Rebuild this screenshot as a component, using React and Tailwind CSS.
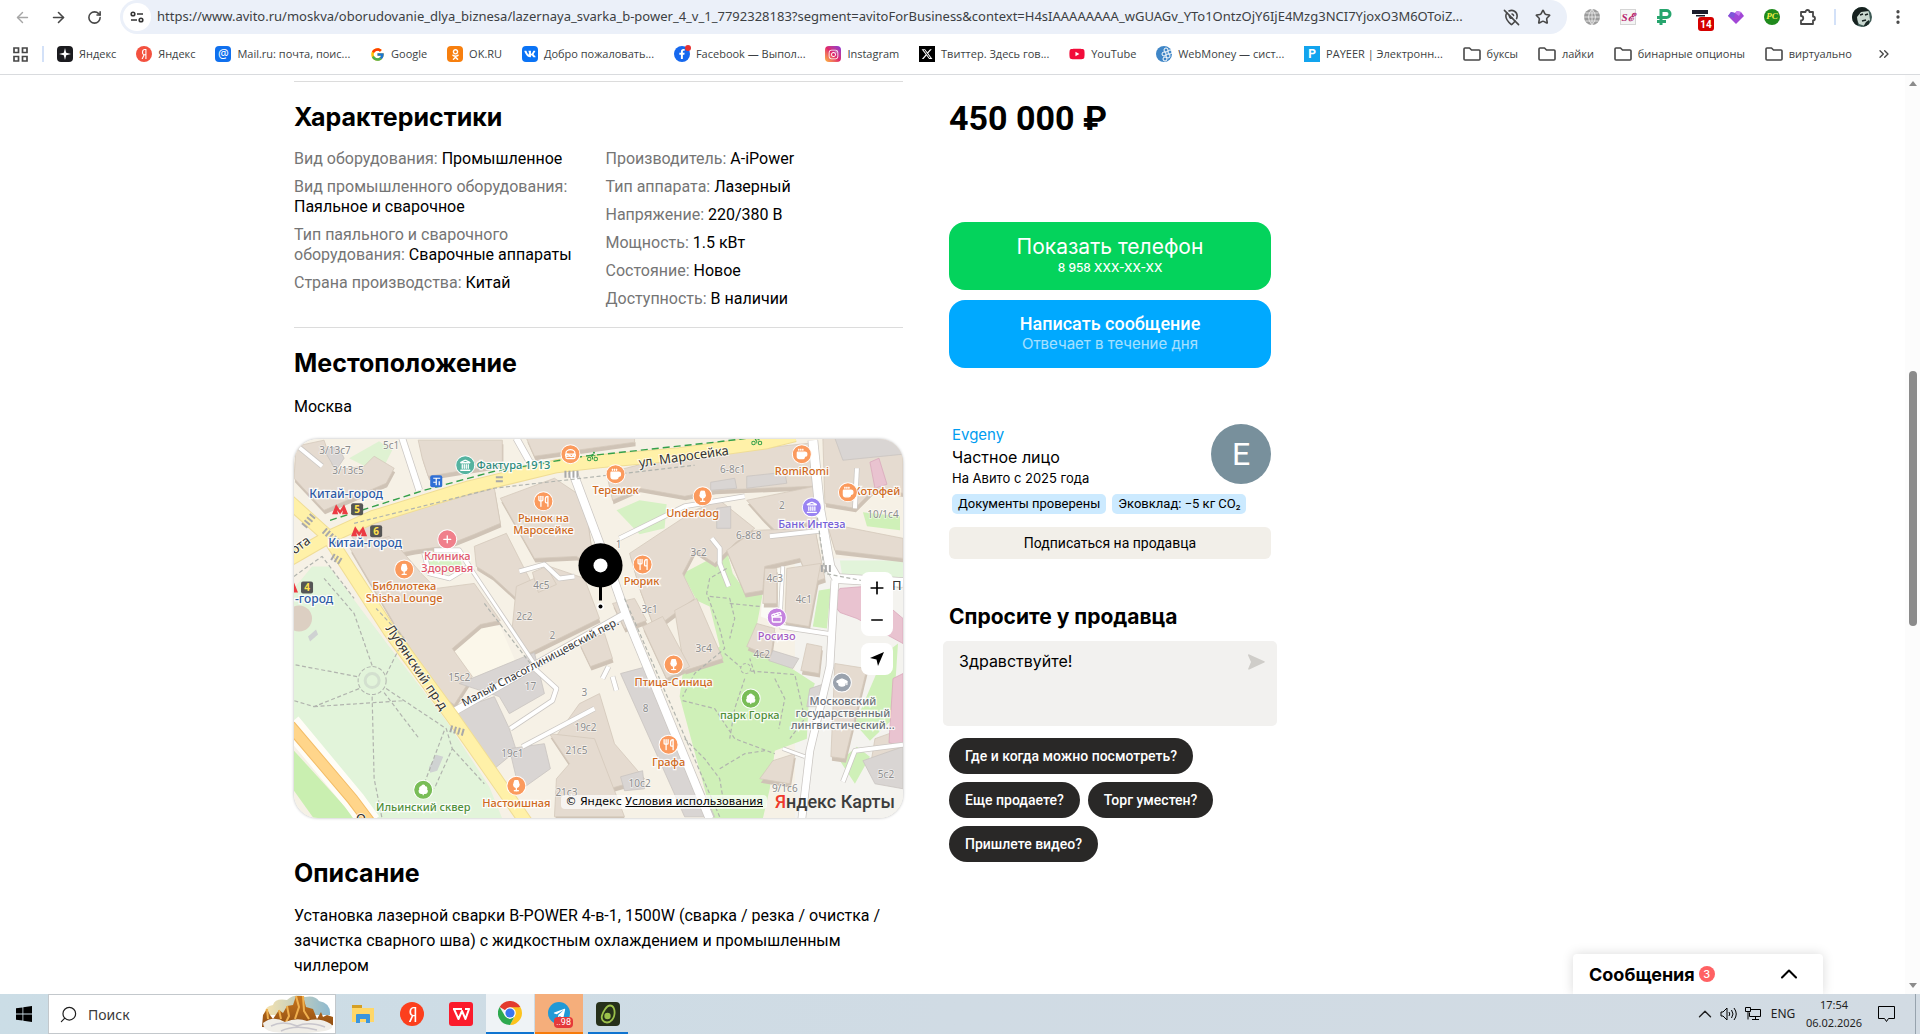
import React from 'react';
import {
  ArrowLeft, ArrowRight, RotateCw, Star, MapPinOff, EllipsisVertical, ChevronsRight,
  ChevronUp, Coffee, Wine, Utensils, Landmark, TreeDeciduous, GraduationCap, Plus, Minus, Hamburger,
  Clapperboard, Search, Bike,
} from 'lucide-react';
import { FaYandex, FaOdnoklassniki, FaVk, FaFacebookF, FaInstagram, FaYoutube, FaTelegramPlane } from 'react-icons/fa';
import { FaXTwitter } from 'react-icons/fa6';
import { FcGoogle } from 'react-icons/fc';

const URL_TEXT =
  'https://www.avito.ru/moskva/oborudovanie_dlya_biznesa/lazernaya_svarka_b-power_4_v_1_7792328183?segment=avitoForBusiness&context=H4sIAAAAAAAA_wGUAGv_YTo1OntzOjY6IjE4Mzg3NCI7YjoxO3M6OToiZ...';

/* ---------- browser chrome ---------- */

function IconButton({ label, children, className = 'w-9' }) {
  return (
    <button type="button" aria-label={label} className={`flex h-[34px] shrink-0 items-center justify-center text-[#474747] ${className}`}>
      {children}
    </button>
  );
}

function Avatar() {
  return (
    <svg viewBox="0 0 20 20" className="size-5">
      <defs><clipPath id="avatar"><circle cx="10" cy="10" r="10" /></clipPath></defs>
      <g clipPath="url(#avatar)">
        <rect width="20" height="20" fill="#3d5a55" />
        <path d="M5 2c5-3 11-1 12 4l1 7-5 6-6-2-3-6z" fill="#c9d8d0" />
        <path d="M0 0h13l4 4-8 1-4 5 1 8-6 2z" fill="#16211f" />
        <path d="M8 8l3-1M13 8l3-1M10 14l4-1" stroke="#16211f" strokeWidth="1.5" />
        <path d="M14 15l3-2v7h-6z" fill="#1c2b28" />
      </g>
    </svg>
  );
}

function Toolbar() {
  return (
    <div className="flex h-[34px] items-center pl-1 pr-1">
      <IconButton label="Назад"><ArrowLeft size={17} className="text-[#a6a6a6]" /></IconButton>
      <IconButton label="Вперёд"><ArrowRight size={17} strokeWidth={2.3} /></IconButton>
      <IconButton label="Обновить"><RotateCw size={15} strokeWidth={2.5} /></IconButton>
      <div className="ml-2 flex h-[34px] min-w-0 flex-1 items-center rounded-full bg-[#ebf0f9] pl-[3px] pr-2">
        <button type="button" aria-label="Сведения о сайте" className="mr-1.5 flex size-7 shrink-0 items-center justify-center rounded-full bg-white">
          <svg viewBox="0 0 14 12" className="h-3 w-3.5" fill="none" stroke="#333" strokeWidth="1.6">
            <circle cx="3" cy="3" r="1.8" /><path d="M7 3h6M1 9h6" /><circle cx="11" cy="9" r="1.8" />
          </svg>
        </button>
        <input aria-label="Адресная строка" readOnly value={URL_TEXT} className="min-w-0 flex-1 bg-transparent font-['Noto_Sans',sans-serif] text-[13px] text-[#3c3f43] outline-none" />
        <IconButton label="Местоположение" className="w-8"><MapPinOff size={17} strokeWidth={2.2} /></IconButton>
        <IconButton label="Добавить в закладки" className="w-8"><Star size={16} strokeWidth={2.4} /></IconButton>
      </div>
      <div className="ml-[7px] flex">
        <IconButton label="VPN">
          <svg viewBox="0 0 16 16" className="size-4"><circle cx="8" cy="8" r="8" fill="#9b9b9b" /><path d="M0 8h16M1.500 4h13M1.500 12h13M8 0v16M8 0Q1 8 8 16M8 0Q15 8 8 16" fill="none" stroke="#e9e9e9" strokeWidth="0.9" /></svg>
        </IconButton>
        <IconButton label="SE">
          <span className="flex size-4 items-center justify-center border border-[#d5d5d5] bg-[#f4f4f4] font-['Liberation_Serif',serif] text-[11px] font-bold italic text-[#b81f6e]">Sℰ</span>
        </IconButton>
        <IconButton label="Рубль">
          <svg viewBox="0 0 16 16" className="size-4" fill="none" stroke="#27a56e" strokeWidth="3"><path d="M5 16V1.500h5.500a3.200 3.200 0 010 7H1M1 12.500h9" /></svg>
        </IconButton>
        <IconButton label="Шляпа" className="relative w-9">
          <svg viewBox="0 0 16 16" className="size-4"><path d="M0 1h16v4H0zM4 6h9v1.500H4z" fill="#1c1c2b" /></svg>
          <span className="absolute left-4 top-[17px] flex h-3.5 w-4 items-center justify-center rounded-[3px] bg-[#d50000] font-[Roboto,sans-serif] text-[10px] font-bold text-white">14</span>
        </IconButton>
        <IconButton label="Кристалл">
          <svg viewBox="0 0 16 16" className="size-4"><path d="M8 15L0 7l3-4 4 1 2-2 4 1 3 4z" fill="#a146d6" /><path d="M7 4l2-2 4 1-2 4z" fill="#c77bf0" /><path d="M0 7l3-4 4 1-1 5z" fill="#7e57d8" /></svg>
        </IconButton>
        <IconButton label="PC">
          <span className="flex size-4 items-center justify-center rounded-full bg-[#1f8a1c] font-['Liberation_Serif',serif] text-[9px] font-bold italic text-[#f3ee4a]">PC</span>
        </IconButton>
        <IconButton label="Расширения">
          <svg viewBox="0 0 18 18" className="size-[18px]" fill="none" stroke="currentColor" strokeWidth="1.8" strokeLinejoin="round">
            <path d="M2 4h4.500a2 2 0 014 0H14v4.500a2 2 0 010 4V16H2v-3.500a2.200 2.200 0 000-4.500z" />
          </svg>
        </IconButton>
      </div>
      <span className="mx-2 h-4 w-0.5 bg-[#d3e1f8]" />
      <IconButton label="Профиль"><Avatar /></IconButton>
      <IconButton label="Меню"><EllipsisVertical size={18} strokeWidth={2.4} /></IconButton>
    </div>
  );
}

const tile = 'flex size-4 shrink-0 items-center justify-center';

function FolderIcon() {
  return (
    <svg viewBox="0 0 18 14" className="h-3.5 w-[18px] shrink-0" fill="none" stroke="#474747" strokeWidth="1.600" strokeLinejoin="round">
      <path d="M1 2q0-1 1-1h4.500L8.500 3H16q1 0 1 1v8q0 1-1 1H2q-1 0-1-1z" />
    </svg>
  );
}

const BOOKMARKS = [
  { t: 'Яндекс', i: <span className={`${tile} rounded bg-[#1b1b1f]`}><svg viewBox="0 0 12 12" className="size-3"><path d="M6 0L7.200 4.800 12 6 7.200 7.200 6 12 4.800 7.200 0 6 4.800 4.800z" fill="#fff" /></svg></span> },
  { t: 'Яндекс', i: <span className={`${tile} rounded-full bg-[#f3513f] text-white`}><FaYandex size={10} /></span> },
  { t: 'Mail.ru: почта, поис...', i: <span className={`${tile} rounded bg-[#1070ee] font-['Noto_Sans',sans-serif] text-[12px] leading-none text-white`}>@</span> },
  { t: 'Google', i: <FcGoogle size={15} /> },
  { t: 'OK.RU', i: <span className={`${tile} rounded bg-[#f77f0e] text-white`}><FaOdnoklassniki size={11} /></span> },
  { t: 'Добро пожаловать...', i: <span className={`${tile} rounded bg-[#0a73f5] text-white`}><FaVk size={12} /></span> },
  { t: 'Facebook — Выпол...', i: <span className={`${tile} relative rounded-full bg-[#1668ee] text-white`}><FaFacebookF size={10} /><span className="absolute -right-px -top-px size-1.5 rounded-full bg-[#e63232]" /></span> },
  { t: 'Instagram', i: <span className={`${tile} rounded bg-gradient-to-tr from-[#fdb52c] via-[#e0246b] to-[#8a2bd8] text-white`}><FaInstagram size={11} /></span> },
  { t: 'Твиттер. Здесь гов...', i: <span className={`${tile} bg-black text-white`}><FaXTwitter size={12} /></span> },
  { t: 'YouTube', i: <FaYoutube size={16} className="text-[#f20c3a]" /> },
  { t: 'WebMoney — сист...', i: <svg viewBox="0 0 16 16" className="size-4 shrink-0"><circle cx="8" cy="8" r="8" fill="#3f86c7" /><g fill="none" stroke="#fff"><circle cx="10" cy="4" r="2" /><circle cx="14" cy="6" r="2" /><circle cx="8" cy="8" r="2" /><circle cx="12" cy="10" r="2" /><circle cx="9" cy="13" r="2" /></g></svg> },
  { t: 'PAYEER | Электронн...', i: <span className={`${tile} bg-[#12a4ee] font-[Roboto,sans-serif] text-[12px] font-bold leading-none text-white`}>P</span> },
  ...['буксы', 'лайки', 'бинарные опционы', 'виртуально'].map((t) => ({ t, i: <FolderIcon /> })),
];

function BookmarksBar() {
  return (
    <nav aria-label="Закладки" className="flex h-[41px] items-center border-b border-[#d9dbde] pl-3 pr-7 font-['Open_Sans',sans-serif] text-[11px] text-[#3c3f43]">
      <button type="button" aria-label="Приложения" className="px-px">
        <svg viewBox="0 0 15 15" className="size-[15px]" fill="none" stroke="#474747" strokeWidth="1.700"><path d="M1 1h4.500v4.500H1zM9.500 1H14v4.500H9.500zM1 9.500h4.500V14H1zM9.500 9.500H14V14H9.500z" /></svg>
      </button>
      <span className="mx-[13px] h-4 w-0.5 shrink-0 bg-[#d3e1f8]" />
      <ul className="flex min-w-0 flex-1 items-center justify-between">
        {BOOKMARKS.map((b, k) => (
          <li key={k}>
            <a href="#bookmark" className="flex items-center gap-1.5 whitespace-nowrap">{b.i}{b.t}</a>
          </li>
        ))}
      </ul>
      <button type="button" aria-label="Другие закладки" className="ml-6 text-[#474747]"><ChevronsRight size={16} /></button>
    </nav>
  );
}

/* ---------- map ---------- */

const DASHED = [
  'M78 227L60 175 30 140M92 236L110 200 82 170M63 238L0 226M65 250L20 268 0 262M78 258L80 340 88 380M92 250L152 290 158 310 140 350M90 254L125 300M20 268L110 262M158 310L190 345M150 292L130 345',
  'M432 130L415 140 412 155 425 190 430 210 400 235 388 258M415 158L435 160 440 180 435 200M435 165L465 168M430 215L450 232 500 236 510 280 495 300M388 262L420 270 440 300 480 315M460 235L455 220M450 240L440 270 435 300M390 300L410 320 425 340 430 370M480 240L490 260 484 290M425 330L450 315 470 312',
  'M0 138L28 118 60 160M60 85L200 50 400 27M190 165L236 225M330 160L425 378M520 60L530 135 608 150',
];

const BUILDINGS = [
  'M2 8L30 2 40 32 70 28 80 18 100 30 92 45 30 72 0 40z',
  'M124 2H208V26L134 38 128 20z',
  'M232 0H340V4L240 18z',
  'M58 98L80 82 200 50 206 85 180 96 150 108 120 112 70 122z',
  'M56 110L95 98 128 136 142 150 180 145 206 182 186 186 158 210 178 238 160 266 148 258 100 185z',
  'M180 108L212 95 240 150 222 160 198 138 182 128z',
  'M222 148L240 140 255 128 290 140 305 180 234 215 218 188z',
  'M206 60L260 40 290 60 300 130 282 118 240 120z',
  'M238 134L252 128 262 146 244 154z',
  'M312 35L370 20 515 5 518 48 420 52 390 58 345 50 318 62z',
  'M452 62L520 48 524 82 480 92 468 80z',
  'M335 115L400 72 425 62 460 90 440 105 420 125 400 112 388 135 400 160 360 190 345 150z',
  'M432 112L460 92 520 90 530 140 515 145 505 120 470 128 468 152 450 155z',
  'M380 172L402 160 428 220 390 232z',
  'M318 165L340 160 352 182 330 190z',
  'M348 188L368 178 395 228 372 240z',
  'M470 130L482 130 482 165 468 165z',
  'M492 130L526 125 514 188 490 184z',
  'M462 185L480 190 476 218 452 208z',
  'M512 205L527 208 524 235 506 232z',
  'M528 0H608V55L580 50 560 70 530 65z',
  'M532 85L608 100V120L540 112z',
  'M540 225L572 230 550 320 536 318z',
  'M580 300L608 290V340L575 330z',
  'M478 322L500 315 495 345 465 340z',
  'M285 265L305 255 320 305 350 340 315 350 300 310 260 300z',
  'M255 295L300 300 330 378 260 378 262 340 275 325z',
  'M285 205L310 195 318 220 296 228z',
];

const GREY_BUILDINGS = [
  'M165 245L240 214 250 255 215 275 205 258z',
  'M160 272L200 258 215 290 222 312 200 330 178 300z',
  'M215 310L250 305 256 330 225 352z',
  'M416 44L440 40 442 50 416 52z',
  'M452 38L490 34 492 45 452 50z',
  'M422 70L436 68 436 90 422 90z',
  'M326 235L352 228 420 378 390 378z',
  'M478 212L504 220 498 230 474 222z',
  'M515 250L530 245 526 268 512 268z',
  'M30 12L44 8 50 20 42 32z',
  'M540 0H608V16L548 22z',
  'M326 338L348 332 350 350 330 352z',
  'M568 322L608 308V350L580 345z',
];

const WHITE_ROADS = [
  ['M108 0L125 52', 6], ['M222 0L236 25 262 28', 6], ['M278 33L305 105 318 138 332 178 365 258 415 380', 8],
  ['M158 274L242 226 330 176', 7], ['M518 2L525 72 535 128 542 140 608 144', 9], ['M540 142L535 228 515 312 507 380', 7],
  ['M0 5L28 28', 4], ['M325 100L390 68 450 58', 4], ['M417 100L425 110 425 125 434 148', 4], ['M475 98L530 92', 4],
  ['M485 188L538 196', 4], ['M488 128L485 188', 3], ['M225 133L250 126 265 140 280 138', 4], ['M240 230L262 250 258 262 216 290', 4],
  ['M228 308L300 270', 4], ['M130 115L135 135 155 140 175 128 165 112 140 112', 4], ['M175 128L240 225', 3], ['M548 343L560 312 608 306', 4], ['M562 30L560 70', 4],
  ['M488 310L510 318', 3], ['M308 240L314 228M322 252L318 238', 4],
];

const HOUSE_NUMBERS = [
  ['3/13с7', 41, 16], ['5с1', 97, 11], ['3/13с5', 54, 36], ['4с5', 247, 151], ['2с2', 230, 182], ['2', 258, 200], ['15с2', 165, 242],
  ['17', 236, 251], ['3', 290, 257], ['19с2', 291, 292], ['21с5', 282, 315], ['19с1', 218, 318], ['21с3', 272, 357],
  ['6-8с1', 438, 35], ['2', 487, 71], ['6-8с8', 454, 101], ['3с2', 404, 118], ['1', 324, 110], ['4с3', 480, 144], ['4с1', 509, 165],
  ['3с1', 355, 175], ['3с4', 409, 213], ['4с2', 467, 219], ['8', 351, 273], ['10с2', 345, 348], ['9/1с6', 490, 353], ['5с2', 591, 339], ['10/1с4', 588, 80],
];

const ORANGE = '#fb9a5d';
const POIS = [
  [Landmark, 171, 27, '#55b3a0'], [Hamburger, 276, 16, ORANGE], [Utensils, 249, 63, ORANGE], [Plus, 153, 101, '#f07f8b'],
  [Wine, 110, 131, ORANGE, 1], [TreeDeciduous, 129, 351, '#79bd57', 1], [Wine, 222, 347, ORANGE, 1], [Coffee, 321, 36, ORANGE, 1],
  [Wine, 408, 58, ORANGE, 1], [Coffee, 507, 16, ORANGE, 1], [Coffee, 553, 54, ORANGE, 1], [Landmark, 517, 69, '#9a84f2'],
  [Utensils, 348, 126, ORANGE], [Clapperboard, 482, 179, '#c583df'], [Wine, 379, 226, ORANGE, 1], [TreeDeciduous, 456, 260, '#79bd57', 1],
  [Utensils, 374, 306, ORANGE], [GraduationCap, 547, 244, '#9aa2ad', 1],
];

const FOOD = '#cf6a22';
const LABELS = [
  ['Фактура 1913', 219, 31, '#2e8b7c'], ['Рынок на', 249, 84, FOOD], ['Маросейке', 249, 96, FOOD], ['Клиника', 153, 122, '#e0566c'],
  ['Здоровья', 153, 134, '#e0566c'], ['Библиотека', 110, 152, FOOD], ['Shisha Lounge', 110, 164, FOOD], ['Ильинский сквер', 129, 372, '#4f8f3a'],
  ['Настоишная', 222, 368, FOOD], ['Теремок', 321, 56, FOOD], ['Underdog', 398, 79, FOOD], ['RomiRomi', 507, 37, FOOD], ['Котофей', 582, 57, FOOD],
  ['Банк Интеза', 517, 90, '#7560d8'], ['Рюрик', 347, 147, FOOD], ['Росизо', 482, 201, '#a45cc4'], ['Птица-Синица', 379, 247, FOOD],
  ['парк Горка', 455, 280, '#4f8f3a'], ['Графа', 374, 327, FOOD], ['Московский', 548, 266, '#6b7078'], ['государственный', 548, 278, '#6b7078'],
  ['лингвистический...', 548, 290, '#6b7078'],
];

function Metro({ x, y, line, box }) {
  return (
    <g>
      <path d={`M${x - 8} ${y + 5}L${x - 4} ${y - 5} ${x} ${y + 1} ${x + 4} ${y - 5} ${x + 8} ${y + 5}H${x + 2}L${x + 3} ${y + 1} ${x} ${y + 5} ${x - 3} ${y + 1} ${x - 2} ${y + 5}z`} fill="#ec3b42" />
      <rect x={box - 6} y={y - 6} width="12" height="12" rx="2" fill="#555" />
      <text x={box} y={y + 4} textAnchor="middle" fontSize="10" fontWeight="700" fill="#ffe14d">{line}</text>
    </g>
  );
}

function MapDrawing() {
  return (
    <svg viewBox="0 0 608 380" preserveAspectRatio="xMidYMid slice" className="block h-full w-full font-['Noto_Sans',sans-serif]" role="img" aria-label="Карта">
      <rect width="608" height="380" fill="#f6f1e6" />
      <path d="M500 120H608V380H500z" fill="#f4f3ef" />
      {/* parks */}
      <path d="M18 128L35 128 95 208 152 282 195 348 208 380H82L0 282V150z" fill="#e2f4da" />
      <path d="M0 312L62 380H20L0 352z" fill="#c9efb0" />
      <path d="M55 20L85 3 98 12 90 28 75 30z" fill="#dff2d2" />
      <path d="M432 112L388 135 402 162 415 168 425 208 388 235 385 258 418 380H468L475 350 480 312 512 300 514 262 520 245 500 232 458 208 468 155 450 152 438 135z" fill="#cff0b8" />
      <path d="M322 72L345 62 372 66 370 90 345 96z" fill="#d6f1c4" />
      <path d="M524 152L536 150 532 190 518 188zM560 285L590 215 603 205 598 280 575 302zM545 322L562 308 575 318 560 345zM568 74L605 78V92L572 88z" fill="#cff0b8" />
      <path d="M132 118L150 112 165 116 168 128 155 135 138 132z" fill="#d6f1c4" />
      <path d="M545 122H608V142H548z" fill="#e2f4da" />
      {/* courtyards */}
      <path d="M158 210L190 185 206 188 222 225 182 242z" fill="#fbf7ea" />
      <path d="M470 130L490 130 485 185 466 178z" fill="#fbfbf5" />
      {/* buildings */}
      {BUILDINGS.map((d) => <path key={d} d={d} transform="translate(1 4)" fill="#cfc3b6" />)}
      {BUILDINGS.map((d) => <path key={d} d={d} fill="#e5dbd0" stroke="#d5c9bc" strokeWidth="0.8" />)}
      {GREY_BUILDINGS.map((d) => <path key={d} d={d} fill="#d9d5d3" stroke="#c9c4c1" strokeWidth="0.8" />)}
      <g fill="#e9c3d0" stroke="#d9a9bb" strokeWidth="0.8">
        <path d="M575 24L584 20 592 46 580 50zM545 150Q533 162 545 174L562 180 608 205V180L570 148zM598 240L608 235V308L594 304z" />
      </g>
      <circle cx="5" cy="180" r="13" fill="#dccfc2" />
      <path d="M14 198L22 191 24 196 16 203zM135 328L142 316 149 318 143 332 136 334z" fill="#cfd2d2" />
      {/* minor roads */}
      {WHITE_ROADS.map(([d, w]) => <path key={d} d={d} fill="none" stroke="#cbc7c3" strokeWidth={w + 1.5} strokeLinejoin="round" />)}
      {WHITE_ROADS.map(([d, w]) => <path key={d} d={d} fill="none" stroke="#fff" strokeWidth={w} strokeLinejoin="round" />)}
      {/* main roads */}
      <g fill="none" strokeLinejoin="round">
        <path d="M-4 285L60 362 76 384" stroke="#fffdf7" strokeWidth="22" />
        <path d="M-4 287L58 360 76 384" stroke="#f3bd68" strokeWidth="12" />
        <path d="M-4 287L58 360 76 384" stroke="#ffd58a" strokeWidth="10" />
        <path d="M-6 122L32 100 78 79 175 49 262 28 305 23 385 16 472 4 500-3M-6 62L34 98 95 192 158 278 198 335 232 384" stroke="#f0dd96" strokeWidth="14" />
        <path d="M-6 122L32 100 78 79 175 49 262 28 305 23 385 16 472 4 500-3M-6 62L34 98 95 192 158 278 198 335 232 384" stroke="#fff1a8" strokeWidth="12" />
        <path d="M36 82L130 52 200 33 290 18 420 4 470 -2" stroke="#35a04a" strokeWidth="1.4" strokeDasharray="7 4" />
        {DASHED.map((d) => <path key={d} d={d} stroke="#b1b4ae" strokeWidth="1.2" strokeDasharray="4 2.500" />)}
        <path d="M38 118L48 124M10 88L20 76M30 92L44 104M156 290L170 294M205 38V46M270 36H284M526 130H536" stroke="#a9a9a9" strokeWidth="7" strokeDasharray="2 2" />
      </g>
      <circle cx="78" cy="242" r="14" fill="#e2f4da" stroke="#b1b4ae" strokeDasharray="4 2" />
      <circle cx="78" cy="242" r="7" fill="none" stroke="#d3e0cf" strokeWidth="3" />
      <circle cx="451" cy="230" r="5" fill="#cff0b8" stroke="#b1b4ae" strokeDasharray="3 2" />
      {/* captions */}
      <g textAnchor="middle" fontSize="10" fill="#8d8d8d" stroke="#fff" strokeWidth="1.500" strokeOpacity="0.6" paintOrder="stroke">
        {HOUSE_NUMBERS.map(([t, x, y]) => <text key={t + x} x={x} y={y}>{t}</text>)}
      </g>
      <g fontSize="13" fill="#333" stroke="#fff" strokeWidth="2" strokeOpacity="0.7" paintOrder="stroke">
        <text transform="translate(345 29) rotate(-8)">ул. Маросейка</text>
        <text fontSize="13" transform="translate(91 190) rotate(56)">Лубянский пр-д</text>
        <text fontSize="11" transform="translate(170 268) rotate(-28)">Малый Спасоглинищевский пер.</text>
        <text transform="translate(-6 121) rotate(-36)">рота</text>
        <text x="597" y="152">П</text>
        <text x="62" y="384">О</text>
      </g>
      <g textAnchor="middle" fontSize="11" fontWeight="500" stroke="#fff" strokeWidth="2.500" strokeOpacity="0.85" paintOrder="stroke">
        {LABELS.map(([t, x, y, c]) => <text key={t} x={x} y={y} fill={c}>{t}</text>)}
        <g fill="#2d5aa6" fontSize="12">
          <text x="52" y="60">Китай-город</text>
          <text x="71" y="109">Китай-город</text>
          <text x="20" y="165">-город</text>
        </g>
      </g>
      <Metro x={46} y={71} line="5" box={63} />
      <Metro x={65} y={93} line="6" box={82} />
      <Metro x={-4} y={149} line="4" box={13} />
      <rect x="136" y="37" width="12" height="12" rx="2" fill="#2f6fd6" />
      <path d="M139 40h7M142 40v7M145 43v4M139 44h3" stroke="#fff" strokeWidth="1.200" />
      <Bike x={291} y={12} width={14} height={12} stroke="#35a04a" />
      <Bike x={455} y={-4} width={14} height={12} stroke="#35a04a" />
      {POIS.map(([Icon, x, y, c, solid]) => (
        <g key={`${x}-${y}`}>
          <circle cx={x} cy={y} r="9.500" fill={c} stroke="#fff" />
          <Icon x={x - 6} y={y - 6} width={12} height={12} stroke="#fff" fill={solid ? '#fff' : 'none'} strokeWidth={2.6} />
        </g>
      ))}
      {/* pin */}
      <circle cx="306" cy="168" r="3.500" fill="#fff" />
      <circle cx="306" cy="168" r="2" fill="#000" />
      <path d="M304.500 146h3v16h-3z" fill="#000" />
      <circle cx="306" cy="127" r="22" fill="#000" />
      <circle cx="306" cy="127" r="7" fill="#fff" />
    </svg>
  );
}

function LocationMap() {
  return (
    <div className="relative mt-[22px] aspect-[609/379] overflow-hidden rounded-3xl shadow-[0_0_3px_rgba(0,0,0,0.3)]">
      <MapDrawing />
      <div className="absolute right-2.5 top-[133px] flex w-8 flex-col overflow-hidden rounded-lg bg-white">
        <button type="button" aria-label="Приблизить" className="flex h-8 items-center justify-center"><Plus size={20} /></button>
        <button type="button" aria-label="Отдалить" className="flex h-8 items-center justify-center"><Minus size={18} /></button>
      </div>
      <button type="button" aria-label="Моё местоположение" className="absolute right-2.5 top-[204px] flex size-8 items-center justify-center rounded-lg bg-white">
        <svg viewBox="0 0 16 16" className="size-4"><path d="M15 1L9 15 7.500 8.500 1 7z" fill="#000" /></svg>
      </button>
      <div className="absolute bottom-1 right-2 flex items-center gap-2">
        <p className="rounded bg-white/70 px-1 font-['DejaVu_Sans',sans-serif] text-[11px] leading-[14px]">
          © Яндекс <a href="#terms" className="underline">Условия использования</a>
        </p>
        <p className="font-[Roboto,sans-serif] text-[18px] font-medium leading-6 text-[#3d3d3d]"><span className="text-[#f0392b]">Я</span>ндекс Карты</p>
      </div>
    </div>
  );
}

/* ---------- listing ---------- */

const SPECS = [
  [
    ['Вид оборудования', 'Промышленное'],
    ['Вид промышленного оборудования', 'Паяльное и сварочное'],
    ['Тип паяльного и сварочного оборудования', 'Сварочные аппараты'],
    ['Страна производства', 'Китай'],
  ],
  [
    ['Производитель', 'A-iPower'],
    ['Тип аппарата', 'Лазерный'],
    ['Напряжение', '220/380 В'],
    ['Мощность', '1.5 кВт'],
    ['Состояние', 'Новое'],
    ['Доступность', 'В наличии'],
  ],
];

const h2 = 'text-[25px] font-bold leading-8';

function Listing() {
  return (
    <article className="min-w-0 max-w-[609px] flex-1">
      <hr className="border-[#dcdcdc]" />
      <section>
        <h2 className={`mt-[19px] ${h2}`}>Характеристики</h2>
        <div className="mt-4 grid grid-cols-2 gap-x-3.5 font-[Roboto,sans-serif] text-base leading-5">
          {SPECS.map((col, k) => (
            <ul key={k} className="flex flex-col gap-2">
              {col.map(([name, value]) => (
                <li key={name}><span className="text-[#757575]">{name}: </span>{value}</li>
              ))}
            </ul>
          ))}
        </div>
      </section>
      <hr className="mt-[18px] border-[#dcdcdc]" />
      <section>
        <h2 className={`mt-[19px] ${h2}`}>Местоположение</h2>
        <p className="mt-[18px] font-[Roboto,sans-serif] text-base leading-5">Москва</p>
        <LocationMap />
      </section>
      <section>
        <h2 className={`mt-[39px] ${h2}`}>Описание</h2>
        <p className="mt-3.5 font-[Roboto,sans-serif] text-base leading-[25px]">
          Установка лазерной сварки B-POWER 4-в-1, 1500W (сварка / резка / очистка / зачистка сварного шва) с жидкостным охлаждением и промышленным<br />чиллером
        </p>
      </section>
    </article>
  );
}

const QUESTIONS = ['Где и когда можно посмотреть?', 'Еще продаете?', 'Торг уместен?', 'Пришлете видео?'];

function Sidebar() {
  return (
    <aside className="w-[322px] shrink-0">
      <p className="mt-[17px] font-[Roboto,sans-serif] text-[34px] font-bold leading-10">450 000 ₽</p>
      <div className="mt-[84px] flex flex-col gap-2.5 text-white">
        <button type="button" className="flex h-[68px] flex-col items-center justify-center rounded-2xl bg-[#04d35c]">
          <span className="text-[21px] leading-6">Показать телефон</span>
          <span className="text-[12px] font-medium leading-[18px]">8 958 XXX-XX-XX</span>
        </button>
        <button type="button" className="flex h-[68px] flex-col items-center justify-center rounded-2xl bg-[#00a9ff]">
          <span className="font-[Roboto,sans-serif] text-[18px] font-medium leading-5">Написать сообщение</span>
          <span className="text-[15px] leading-5 text-white/65">Отвечает в течение дня</span>
        </button>
      </div>
      <section className="mt-14">
        <div className="flex h-[60px] items-start justify-between pl-[3px]">
          <div>
            <a href="#seller" className="block text-[15px] leading-[22px] text-[#009cf0]">Evgeny</a>
            <p className="text-base leading-[22px]">Частное лицо</p>
            <p className="text-[13px] leading-5">На Авито с 2025 года</p>
          </div>
          <span className="flex size-[60px] items-center justify-center rounded-full bg-[#78909c] font-[Roboto,sans-serif] text-[32px] text-white">E</span>
        </div>
        <div className="mt-2.5 flex gap-1.5 pl-[3px] font-[Roboto,sans-serif] text-[13px] leading-5">
          <span className="rounded-[5px] bg-[#cceaff] px-1.5">Документы проверены</span>
          <span className="rounded-[5px] bg-[#cceaff] px-1.5">Эковклад: −5 кг CO₂</span>
        </div>
        <button type="button" className="mt-[13px] h-8 w-full rounded-md bg-[#f2efe9] font-[Roboto,sans-serif] text-[14px]">Подписаться на продавца</button>
      </section>
      <section className="mt-[45px]">
        <h3 className="text-[21px] font-bold leading-[26px]"><label htmlFor="question">Спросите у продавца</label></h3>
        <div className="relative -mx-1.5 mt-[11px] rounded-[5px] bg-[#f2f1ef]">
          <textarea id="question" defaultValue="Здравствуйте!" className="block h-[85px] w-full resize-none bg-transparent pb-2.5 pl-4 pr-12 pt-[9px] text-base leading-[22px] outline-none" />
          <button type="button" aria-label="Отправить" className="absolute right-3 top-3">
            <svg viewBox="0 0 18 18" className="size-[18px]"><path d="M1 2.300c0-.9.6-1.100 1.300-.8L17.300 8.300c.7.3.7 1 0 1.300L2.300 16.500c-.7.3-1.300 0-1.100-.8L4 9z" fill="#cfcdc9" /></svg>
          </button>
        </div>
        <div className="mt-3 flex flex-wrap gap-2">
          {QUESTIONS.map((q) => (
            <button key={q} type="button" className="h-9 rounded-full bg-[#292827] px-4 font-[Roboto,sans-serif] text-[14px] font-medium text-white">{q}</button>
          ))}
        </div>
      </section>
    </aside>
  );
}

function Messages() {
  return (
    <button type="button" className="absolute bottom-0 right-[97px] flex h-10 w-[250px] items-center rounded-t bg-white pl-4 pr-5 shadow-[0_0_12px_rgba(0,0,0,0.15)]">
      <span className="text-[18px] font-bold">Сообщения</span>
      <span className="ml-1 flex size-4 items-center justify-center rounded-full bg-[#ff6163] text-[11px] font-medium text-white">3</span>
      <ChevronUp size={28} strokeWidth={1.800} className="ml-auto" />
    </button>
  );
}

function Scrollbar() {
  return (
    <div className="absolute inset-y-0 right-0 flex w-[15px] flex-col items-center bg-[#fcfcfc] py-1.5">
      <svg viewBox="0 0 8 5" className="h-[5px] w-2"><path d="M4 0l4 5H0z" fill="#8b8b8b" /></svg>
      <span className="grow-[285]" />
      <span className="w-2 grow-[256] rounded-full bg-[#8b8b8b]" />
      <span className="grow-[357]" />
      <svg viewBox="0 0 8 5" className="h-[5px] w-2"><path d="M0 0h8L4 5z" fill="#8b8b8b" /></svg>
    </div>
  );
}

/* ---------- taskbar ---------- */

function Mountains() {
  return (
    <svg viewBox="0 0 74 38" className="h-[38px] w-[74px]">
      <defs>
        <linearGradient id="sky" x2="1" y2="0"><stop stopColor="#f7e3ae" /><stop offset="1" stopColor="#8db9cf" /></linearGradient>
        <linearGradient id="rock" x2="0" y2="1"><stop stopColor="#c9771d" /><stop offset="1" stopColor="#8b4a12" /></linearGradient>
      </defs>
      <path d="M4 20Q2 12 12 10 14 3 26 5 34-2 44 2 54 0 58 6 70 8 69 20z" fill="url(#sky)" />
      <path d="M1 32L2 20 6 14 9 20 12 24 18 15 22 18 26 11 32 10 35 1 42 1 45 12 52 14 56 24 60 17 62 22 66 20 72 22 72 30 60 34z" fill="url(#rock)" />
      <path d="M35 1l3 11-4 12M42 1l1 15 5 8M26 11l2 10-3 6M18 15l2 9M6 14l1 10" fill="none" stroke="#f0b04e" strokeWidth="2" />
      <path d="M2 28Q12 20 24 27 36 22 46 26 58 22 70 29 74 34 64 36 40 40 12 37 2 35 2 28z" fill="#f0eee8" />
      <path d="M10 31q12-6 26 0 12-5 28 1M20 36q14-7 36-1" fill="none" stroke="#c8c6cc" strokeWidth="1.500" />
    </svg>
  );
}

function ChromeLogo() {
  return (
    <svg viewBox="0 0 24 24" className="size-6">
      <path d="M12 12L1.600 6A12 12 0 0122.400 6z" fill="#e33b2e" />
      <path d="M12 6.200H22.500A12 12 0 0112 24l5-9.100z" fill="#fcc31e" />
      <path d="M1.600 6L7 14.900 12 17.800 16.500 15.500 12 24A12 12 0 011.600 6z" fill="#2da94f" />
      <circle cx="12" cy="12" r="5.800" fill="#fff" /><circle cx="12" cy="12" r="4.600" fill="#3a76f0" />
    </svg>
  );
}

function TaskButton({ label, children, className = '' }) {
  return <button type="button" aria-label={label} className={`relative flex h-10 w-12 items-center justify-center ${className}`}>{children}</button>;
}

function Taskbar() {
  return (
    <footer className="flex h-10 shrink-0 items-center bg-gradient-to-r from-[#cbdde6] via-[#d0dbe4] to-[#d2dbe3] font-['Noto_Sans',sans-serif] text-[#1f1f1f]">
      <TaskButton label="Пуск">
        <svg viewBox="0 0 16 16" className="size-4"><path d="M0 2.300l6.500-.9v6.200H0zM7.300 1.300L16 0v7.600H7.300zM0 8.400h6.500v6.200L0 13.700zM7.300 8.400H16V16l-8.700-1.300z" fill="#000" /></svg>
      </TaskButton>
      <label className="flex h-10 w-[288px] items-center border border-[#c3c8cc] bg-white pl-2.5">
        <Search size={19} strokeWidth={1.500} className="-scale-x-100" />
        <input type="text" placeholder="Поиск" aria-label="Поиск" className="ml-2.5 min-w-0 flex-1 text-[14px] outline-none placeholder:text-[#3a3a3a]" />
        <Mountains />
      </label>
      <div className="ml-[3px] flex gap-px">
        <TaskButton label="Проводник">
          <svg viewBox="0 0 22 20" className="h-5 w-[22px]"><path d="M0 1h10v4H0z" fill="#d59f25" /><path d="M0 4h22v14H0z" fill="#ffd768" /><path d="M4 11q0-1 1-1h12q1 0 1 1v8h-4v-4H8v4H4z" fill="#3b95dc" /></svg>
        </TaskButton>
        <TaskButton label="Яндекс"><span className="flex size-6 items-center justify-center rounded-full bg-[#fc3f1d] text-white"><FaYandex size={15} /></span></TaskButton>
        <TaskButton label="WPS Office">
          <svg viewBox="0 0 24 24" className="size-6"><rect width="24" height="24" rx="3" fill="#fb1b2c" /><path d="M4 7h9M5 7l4.500 10L13 9l3.500 8L20 7h-4" fill="none" stroke="#fff" strokeWidth="2" strokeLinejoin="round" /></svg>
        </TaskButton>
        <TaskButton label="Google Chrome" className="border-b-2 border-[#0f74d0] bg-[#eff3f6]"><ChromeLogo /></TaskButton>
        <TaskButton label="Telegram" className="border-b-2 border-[#f77b0b] bg-[#f5ae7b]">
          <span className="flex size-[22px] items-center justify-center rounded-full bg-[#2199d6] text-white"><FaTelegramPlane size={13} /></span>
          <span className="absolute bottom-1 right-2.5 rounded-sm bg-[#e5393a] px-0.5 font-[Roboto,sans-serif] text-[9px] leading-[11px] text-white">..98</span>
        </TaskButton>
        <TaskButton label="Авокадо">
          <svg viewBox="0 0 24 24" className="size-6"><rect width="24" height="24" rx="4" fill="#26301a" /><path d="M14 3.500c3.500 0 5 4 4.500 8.500S15 20.500 11 20.500 5 17 6 13.500 10.500 3.500 14 3.500z" fill="none" stroke="#9bc04a" strokeWidth="1.800" /><circle cx="11.500" cy="14" r="3.200" fill="#9bc04a" /></svg>
          <span className="absolute bottom-0 h-0.5 w-10 bg-[#0f74d0]" />
        </TaskButton>
      </div>
      <div className="ml-auto flex h-10 items-center">
        <button type="button" aria-label="Скрытые значки" className="flex w-6 justify-center"><ChevronUp size={22} strokeWidth={1.500} /></button>
        <button type="button" aria-label="Громкость" className="flex w-6 justify-center">
          <svg viewBox="0 0 18 14" className="h-3.5 w-[18px]" fill="none" stroke="#000"><path d="M1 5h2l4-4v12L3 9H1zM9 5q1.500 2 0 4M11.500 3q3 4 0 8M14 1q4.500 6 0 12" /></svg>
        </button>
        <button type="button" aria-label="Сеть" className="flex w-6 justify-center">
          <svg viewBox="0 0 17 14" className="h-3.5 w-[17px]" fill="none" stroke="#000"><path d="M5.500 2.500h10v7h-11v-4M.5.5h5v4h-5zM3 4.500v8M7 12.500h7M10.500 9.500v3" /></svg>
        </button>
        <button type="button" className="w-9 text-[12px]">ENG</button>
        <button type="button" className="w-[66px] text-center text-[11px] leading-[18px]"><time className="block">17:54</time><time className="block">06.02.2026</time></button>
        <button type="button" aria-label="Уведомления" className="flex w-[38px] justify-center">
          <svg viewBox="0 0 17 16" className="h-4 w-[17px]" fill="none" stroke="#000"><path d="M.5.5h16v12h-6l-2 3-2-3h-6z" /></svg>
        </button>
        <span className="ml-2.5 h-full w-[5px] border-l border-[#97a3ad]" />
      </div>
    </footer>
  );
}

export default function App() {
  return (
    <div className="flex h-screen flex-col overflow-hidden bg-white font-[Inter,sans-serif] text-black">
      <header>
        <Toolbar />
        <BookmarksBar />
      </header>
      <div className="relative min-h-0 flex-1 overflow-hidden pr-[15px]">
        <main className="mx-auto flex max-w-[1317px] gap-[46px] pt-1.5">
          <Listing />
          <Sidebar />
        </main>
        <Messages />
        <Scrollbar />
      </div>
      <Taskbar />
    </div>
  );
}
